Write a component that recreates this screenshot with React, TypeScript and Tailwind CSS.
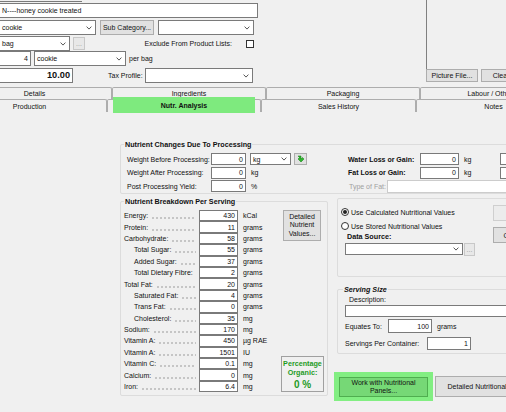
import React from "react";

const ff = "font-['Liberation_Sans',Arial,sans-serif]";

function Chevron() {
  return (
    <svg width="6" height="4" viewBox="0 0 6 4" className="shrink-0">
      <path d="M0.6 0.6 L3 3.1 L5.4 0.6" fill="none" stroke="#444" strokeWidth="0.9" />
    </svg>
  );
}

function Select({ className, value }: { className: string; value?: string }) {
  return (
    <div
      className={`${className} flex shrink-0 items-center justify-between border border-[#7a7a7a] bg-white pl-[2px] pr-[3px]`}
    >
      <span>{value}</span>
      <Chevron />
    </div>
  );
}

function Box({ className, value }: { className: string; value?: string }) {
  return (
    <div
      className={`${className} flex shrink-0 items-center justify-end border border-[#7a7a7a] bg-white pr-[2px]`}
    >
      {value}
    </div>
  );
}

function Btn({ className, children }: { className: string; children?: React.ReactNode }) {
  return (
    <div
      className={`${className} flex shrink-0 items-center justify-center border border-[#adadad] bg-[#e1e1e1] text-center`}
    >
      {children}
    </div>
  );
}

function Radio({ on }: { on?: boolean }) {
  return (
    <div className="flex h-[8px] w-[8px] shrink-0 items-center justify-center rounded-full border border-[#333] bg-white">
      {on && <div className="h-[4px] w-[4px] rounded-full bg-[#222]" />}
    </div>
  );
}

function Tab({ className, label, active }: { className: string; label: string; active?: boolean }) {
  return (
    <div
      className={`${className} relative flex shrink-0 items-center justify-center rounded-t-[2px] border border-b-0 border-[#adadad] bg-[#f0f0f0]`}
    >
      {active ? (
        // green highlight drawn over the selected tab
        <div className="absolute top-[-3px] right-[5px] bottom-[-1px] left-[5px] flex items-center justify-center bg-[#7eea7e] font-bold">
          {label}
        </div>
      ) : (
        label
      )}
    </div>
  );
}

const nutrients: [string, string, string, boolean][] = [
  ["Energy:", "430", "kCal", false],
  ["Protein:", "11", "grams", false],
  ["Carbohydrate:", "58", "grams", false],
  ["Total Sugar:", "55", "grams", true],
  ["Added Sugar:", "37", "grams", true],
  ["Total Dietary Fibre:", "2", "grams", true],
  ["Total Fat:", "20", "grams", false],
  ["Saturated Fat:", "4", "grams", true],
  ["Trans Fat:", "0", "grams", true],
  ["Cholesterol:", "35", "mg", true],
  ["Sodium:", "170", "mg", false],
  ["Vitamin A:", "450", "µg RAE", false],
  ["Vitamin A:", "1501", "IU", false],
  ["Vitamin C:", "0.1", "mg", false],
  ["Calcium:", "0", "mg", false],
  ["Iron:", "6.4", "mg", false],
];

export default function App() {
  return (
    <div
      className={`${ff} h-[412px] w-[506px] overflow-hidden whitespace-nowrap bg-[#f0f0f0] text-[7px] leading-none text-[#111]`}
    >
      {/* Header fields */}
      <div className="flex h-[86px]">
        <div className="flex w-[426px] shrink-0 flex-col">
          <div className="h-[2px] w-[82px] border-b border-[#7a7a7a]" />
          <div className="mt-px flex h-[15px] w-[258px] items-center border border-l-0 border-[#7a7a7a] bg-white pl-[2px]">
            N----honey cookie treated
          </div>
          <div className="mt-[2px] flex h-[15px] items-center">
            <Select className="h-[15px] w-[96px] border-l-0" value="cookie" />
            <Btn className="ml-[4px] h-[15px] w-[54px]">Sub Category...</Btn>
            <Select className="ml-[4px] h-[15px] w-[96px]" />
          </div>
          <div className="mt-px flex h-[15px] w-[254px] items-center">
            <Select className="h-[15px] w-[70px] border-l-0" value="bag" />
            <div className="ml-[3px] flex h-[13px] w-[12px] items-center justify-center border border-[#c8c8c8] bg-[#e8e8e8] text-[#999]">
              ...
            </div>
            <span className="mr-[14px] ml-auto">Exclude From Product Lists:</span>
            <div className="h-[8px] w-[8px] border border-[#333] bg-white" />
          </div>
          <div className="flex h-[15px] items-center">
            <Box className="h-[15px] w-[31px] border-l-0" value="4" />
            <Select className="ml-[3px] h-[15px] w-[92px]" value="cookie" />
            <span className="ml-[3px]">per bag</span>
          </div>
          <div className="mt-[2px] flex h-[15px] items-center">
            <Box className="h-[15px] w-[73px] border-l-0 text-[9.2px] font-bold" value="10.00" />
            <span className="ml-[35px]">Tax Profile:</span>
            <Select className="ml-[2px] h-[15px] w-[108px]" />
          </div>
        </div>
        <div className="flex flex-1 flex-col">
          <div className="h-[69px] border-l border-[#808080]" />
          <div className="flex">
            <Btn className="h-[13px] w-[52px]">Picture File...</Btn>
            <Btn className="ml-[3px] h-[13px] w-[40px]">Clear</Btn>
          </div>
        </div>
      </div>

      {/* Tabs */}
      <div className="flex h-[13px] items-end">
        <div className="-ml-[43px] flex">
          <Tab className="h-[12px] w-[155px]" label="Details" />
          <Tab className="h-[12px] w-[154px]" label="Ingredients" />
          <Tab className="h-[12px] w-[154px]" label="Packaging" />
          <Tab className="h-[12px] w-[140px]" label="Labour / Other" />
        </div>
      </div>
      <div className="flex h-[13px]">
        <div className="-ml-[48px] flex">
          <Tab className="h-[13px] w-[155px]" label="Production" />
          <Tab className="h-[13px] w-[154px]" label="Nutr. Analysis" active />
          <Tab className="h-[13px] w-[155px]" label="Sales History" />
          <Tab className="h-[13px] w-[155px]" label="Notes" />
        </div>
      </div>

      {/* Tab page */}
      <div className="pt-[32px] pl-[120px]">
        {/* Nutrient changes group */}
        <div className="h-[50px] w-[400px] rounded-[2px] border border-[#dcdcdc]">
          <div className="-mt-[5px] ml-[3px] h-[9px] w-fit bg-[#f0f0f0] px-px text-[7.2px] leading-[9px] font-bold">
            Nutrient Changes Due To Processing
          </div>
          <div className="mt-[4px] flex">
            <div className="flex w-[227px] shrink-0 flex-col gap-[1.5px] pl-[6px]">
              <div className="flex h-[12px] items-center">
                <span className="w-[84px] shrink-0">Weight Before Processing:</span>
                <Box className="h-[12px] w-[35px]" value="0" />
                <Select className="ml-[4px] h-[12px] w-[41px]" value="kg" />
                <div className="ml-[3px] flex h-[12px] w-[13px] items-center justify-center border border-[#adadad] bg-[#e1e1e1]">
                  <svg width="8" height="8" viewBox="0 0 8 8">
                    <path d="M1 1 L4 1 L4 4 L5.5 2.5 L7 4 L4 7 L1 4 L2.5 2.5 Z" fill="#2fb52f" stroke="#137a13" strokeWidth="0.5" />
                  </svg>
                </div>
              </div>
              <div className="flex h-[12px] items-center">
                <span className="w-[84px] shrink-0">Weight After Processing:</span>
                <Box className="h-[12px] w-[35px]" value="0" />
                <span className="ml-[5px]">kg</span>
              </div>
              <div className="flex h-[12px] items-center">
                <span className="w-[84px] shrink-0">Post Processing Yield:</span>
                <Box className="h-[12px] w-[35px]" value="0" />
                <span className="ml-[5px]">%</span>
              </div>
            </div>
            <div className="flex flex-col gap-[1.5px]">
              <div className="flex h-[12px] items-center">
                <span className="w-[72px] shrink-0 font-bold">Water Loss or Gain:</span>
                <Box className="h-[12px] w-[39px]" value="0" />
                <span className="ml-[5px] w-[36px] shrink-0">kg</span>
                <Box className="h-[12px] w-[40px]" />
              </div>
              <div className="flex h-[12px] items-center">
                <span className="w-[72px] shrink-0 font-bold">Fat Loss or Gain:</span>
                <Box className="h-[12px] w-[39px]" value="0" />
                <span className="ml-[5px] w-[36px] shrink-0">kg</span>
                <Box className="h-[12px] w-[40px]" />
              </div>
              <div className="flex h-[12px] items-center">
                <span className="w-[39px] shrink-0 pl-px text-[#a0a0a0]">Type of Fat:</span>
                <div className="h-[13px] w-[150px] border border-[#cccccc] bg-white" />
              </div>
            </div>
          </div>
        </div>

        <div className="mt-[3px] flex">
          {/* Nutrient breakdown group */}
          <div className="mt-[4px] h-[195px] w-[208px] shrink-0 rounded-[2px] border border-[#dcdcdc]">
            <div className="-mt-[5px] ml-[3px] h-[9px] w-fit bg-[#f0f0f0] px-px text-[7.2px] leading-[9px] font-bold">
              Nutrient Breakdown Per Serving
            </div>
            <div className="mt-[4px] flex pl-[3px]">
              <div className="flex w-[157px] shrink-0 flex-col">
                {nutrients.map(([label, value, unit, sub], i) => (
                  <div key={i} className="flex h-[11.4px] items-center">
                    <div className={`flex h-full w-[75px] shrink-0 items-center pr-[3px] ${sub ? "pl-[10px]" : ""}`}>
                      <span className="shrink-0">{label}</span>
                      {/* dot leader */}
                      <span className="mt-[5px] ml-[3px] h-[2px] flex-1 bg-[radial-gradient(circle,#666_0.5px,transparent_0.8px)] bg-[length:4px_2px] bg-repeat-x" />
                    </div>
                    <Box className="h-[11.4px] w-[39px]" value={value} />
                    <span className="ml-[5px]">{unit}</span>
                  </div>
                ))}
              </div>
              <div className="flex w-[43px] flex-col">
                <Btn className="ml-[2px] h-[31px] w-[38px] flex-col leading-[8.5px]">
                  <span>Detailed</span>
                  <span>Nutrient</span>
                  <span>Values...</span>
                </Btn>
                <div className="mt-[115px] flex h-[36px] w-[43px] flex-col items-center border border-[#a0a0a0] pt-[3px] text-[7.2px] font-bold text-[#1e9b1e]">
                  <span className="leading-[8.5px]">Percentage</span>
                  <span className="leading-[8.5px]">Organic:</span>
                  <span className="mt-[3px] text-[10px]">0 %</span>
                </div>
              </div>
            </div>
          </div>

          {/* Right column */}
          <div className="mt-px ml-[9px] flex w-[180px] shrink-0 flex-col">
            <div className="flex h-[79px] rounded-[2px] border border-[#dcdcdc]">
              <div className="flex w-[155px] shrink-0 flex-col pt-[8px] pl-[3px]">
                <div className="flex h-[10px] items-center gap-[2px]">
                  <Radio on />
                  <span>Use Calculated Nutritional Values</span>
                </div>
                <div className="mt-[4px] flex h-[10px] items-center gap-[2px]">
                  <Radio />
                  <span>Use Stored Nutritional Values</span>
                </div>
                <div className="mt-px flex h-[9px] items-center pl-[6px] text-[7.2px] font-bold">Data Source:</div>
                <div className="mt-[2px] flex items-start pl-[4px]">
                  <Select className="h-[12px] w-[118px]" />
                  <div className="ml-px flex h-[13px] w-[11px] items-center justify-center border border-[#c8c8c8] bg-[#e8e8e8] text-[#999]">
                    ...
                  </div>
                </div>
              </div>
              <div className="flex flex-col pt-[6px]">
                <div className="h-[16px] w-[50px] border border-[#cfcfcf] bg-[#ececec]" />
                <Btn className="mt-[6px] h-[16px] w-[50px]">Calculate</Btn>
              </div>
            </div>

            <div className="mt-[12px] rounded-[2px] border border-[#dcdcdc] pb-[3px]">
              <div className="-mt-[5px] ml-[5px] h-[9px] w-fit bg-[#f0f0f0] px-px text-[7.2px] leading-[9px] font-bold italic">
                Serving Size
              </div>
              <div className="mt-px flex h-[9px] items-center pl-[11px]">Description:</div>
              <div className="mt-px pl-[7px]">
                <div className="h-[12px] w-[170px] border border-[#7a7a7a] bg-white" />
              </div>
              <div className="mt-[2px] flex h-[14px] items-center pl-[7px]">
                <span className="w-[43px] shrink-0">Equates To:</span>
                <Box className="h-[14px] w-[44px]" value="100" />
                <span className="ml-[5px]">grams</span>
              </div>
              <div className="mt-[4px] flex h-[13px] items-center pl-[7px]">
                <span className="w-[82px] shrink-0">Servings Per Container:</span>
                <Box className="h-[13px] w-[44px]" value="1" />
              </div>
            </div>

            <div className="mt-[18px] -ml-[3px] flex items-start">
              <div className="h-[29px] w-[99px] shrink-0 bg-[#82ee82] px-[5px] pt-[5px]">
                <div className="flex h-[20px] flex-col items-center justify-center border border-[#4fae4f] bg-[#76d876] leading-[8.5px]">
                  <span>Work with Nutritional</span>
                  <span>Panels...</span>
                </div>
              </div>
              <Btn className="mt-[4px] ml-[2px] h-[21px] w-[90px]">Detailed Nutritional...</Btn>
            </div>
          </div>
        </div>
      </div>
    </div>
  );
}
